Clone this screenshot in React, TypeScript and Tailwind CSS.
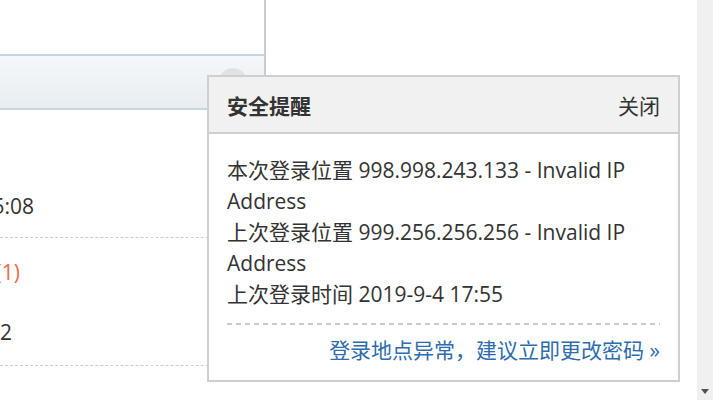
const font = "font-['Open_Sans','Noto_Sans_CJK_SC',sans-serif]"

function ClippedText({ end, children }: { end: string; children: React.ReactNode }) {
  // text runs off the left edge of the window; only its tail is visible
  return <div className={`flex justify-end whitespace-nowrap ${end}`}>{children}</div>
}

function SecurityNotice() {
  return (
    <div className={`absolute left-[207px] top-[75px] w-[473px] border-2 border-[#cfcfcf] bg-white text-[21px] text-[#333] ${font}`}>
      <div className="flex h-[57px] items-start justify-between border-b-2 border-[#cfcfcf] bg-[#f1f1f1] px-[18px] pt-[14px] leading-[31px]">
        <span className="font-bold">安全提醒</span>
        <span className="cursor-pointer">关闭</span>
      </div>
      <div className="px-[18px] pt-[21px] pb-[14px] leading-[31px]">
        <p>本次登录位置 998.998.243.133 - Invalid IP Address</p>
        <p>上次登录位置 999.256.256.256 - Invalid IP Address</p>
        <p>上次登录时间 2019-9-4 17:55</p>
        <div className="mt-[13px] mb-[10px] h-[2px] bg-[linear-gradient(to_right,#cccccc_5px,transparent_5px)] bg-[length:9px_2px]" />
        <div className="text-right">
          <a className="text-[#2d6cae]">登录地点异常，建议立即更改密码 »</a>
        </div>
      </div>
    </div>
  )
}

export default function App() {
  return (
    <div className={`relative flex h-[400px] w-[713px] overflow-hidden bg-white ${font}`}>
      <div className="flex-1">
        <div className="w-[266px] border-r-2 border-[#cccccc]">
          <div className="h-[54px]" />
          <div className="relative h-[56px] border-y-2 border-[#c6d6e3] bg-gradient-to-b from-[#f5f8fa] to-[#e7edf1]">
            <div className="absolute left-[219px] top-[12px] h-[28px] w-[28px] rounded-full bg-[#e2e2e2]" />
          </div>
        </div>
        <div className="w-[600px] text-[21px] leading-[31px] text-[#333]">
          <div className="flex h-[128px] items-end border-b border-dashed border-[#cccccc] pb-[15px]">
            <ClippedText end="w-[34px]">登录时间 2019-9-5 15:08</ClippedText>
          </div>
          <div className="flex h-[128px] flex-col justify-between border-b border-dashed border-[#cccccc] pt-[19px] pb-[17px]">
            <ClippedText end="w-[20px]">
              <span>未读消息 </span>
              <span className="text-[#f2694b]">(1)</span>
            </ClippedText>
            <ClippedText end="w-[12px]">待处理工单 2</ClippedText>
          </div>
        </div>
      </div>
      <div className="relative w-[16px] bg-[#f0f0f0]">
        <svg className="absolute bottom-[6px] left-[4px]" width="8" height="5" viewBox="0 0 8 5">
          <path d="M0 0 H8 L4 5 Z" fill="#505050" />
        </svg>
      </div>
      <SecurityNotice />
    </div>
  )
}
